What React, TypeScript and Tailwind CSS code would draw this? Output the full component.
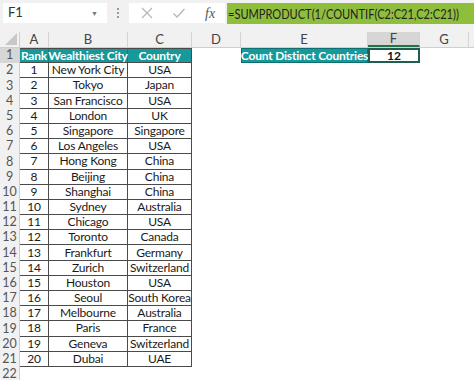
import React from "react";

const data: [number, string, string][] = [
  [1, "New York City", "USA"],
  [2, "Tokyo", "Japan"],
  [3, "San Francisco", "USA"],
  [4, "London", "UK"],
  [5, "Singapore", "Singapore"],
  [6, "Los Angeles", "USA"],
  [7, "Hong Kong", "China"],
  [8, "Beijing", "China"],
  [9, "Shanghai", "China"],
  [10, "Sydney", "Australia"],
  [11, "Chicago", "USA"],
  [12, "Toronto", "Canada"],
  [13, "Frankfurt", "Germany"],
  [14, "Zurich", "Switzerland"],
  [15, "Houston", "USA"],
  [16, "Seoul", "South Korea"],
  [17, "Melbourne", "Australia"],
  [18, "Paris", "France"],
  [19, "Geneva", "Switzerland"],
  [20, "Dubai", "UAE"],
];

const font = { fontFamily: "Lato, 'Open Sans', sans-serif" };

function ColHeader({ w, label, active }: { w: string; label: string; active?: boolean }) {
  return (
    <div
      className={`${w} h-full flex items-center justify-center border-r border-[#d4d4d4] text-[13px] text-[#444] ${
        active ? "bg-[#d6d6d6] border-b-2 border-b-[#217346]" : ""
      }`}
    >
      {label}
    </div>
  );
}

export default function App() {
  const rowH = "h-[15.2px]";
  return (
    <div className="w-[474px] h-[380px] bg-white overflow-hidden relative" style={font}>
      {/* toolbar */}
      <div className="h-[32px] bg-[#f1f1f1] flex items-start pt-[3px] pl-[3px]">
        <div className="w-[104px] h-[20px] bg-white flex items-center justify-between pl-[5px] pr-[9px] text-[13px] text-[#333]">
          <span>F1</span>
          <span className="text-[7px] text-[#777]">▼</span>
        </div>
        <div className="w-[22px] h-[20px] flex flex-col items-center justify-center gap-[2px]">
          <span className="w-[2px] h-[2px] bg-[#999]" />
          <span className="w-[2px] h-[2px] bg-[#999]" />
          <span className="w-[2px] h-[2px] bg-[#999]" />
        </div>
        <div className="w-[96px] h-[20px] bg-white flex items-center">
          <svg width="14" height="14" viewBox="0 0 14 14" className="ml-[11px]">
            <path d="M2 2 L12 12 M12 2 L2 12" stroke="#b5b5b5" strokeWidth="1.2" />
          </svg>
          <svg width="14" height="14" viewBox="0 0 14 14" className="ml-[18px]">
            <path d="M1.5 7.5 L5 11 L12.5 3" stroke="#b5b5b5" strokeWidth="1.3" fill="none" />
          </svg>
          <span
            className="ml-[19px] text-[14px] italic text-[#555]"
            style={{ fontFamily: "'Liberation Serif', serif" }}
          >
            fx
          </span>
        </div>
        <div className="ml-[2px] flex-1 h-[21px] bg-[#8fbe3d] flex items-center pl-[1px] text-[14px] text-[#222] whitespace-nowrap overflow-hidden">
          <span className="inline-block origin-left scale-x-[0.79]">=SUMPRODUCT(1/COUNTIF(C2:C21,C2:C21))</span>
        </div>
      </div>

      {/* column header row */}
      <div className="h-[16px] bg-[#f1f1f1] flex border-b border-[#cfcfcf]">
        <div className="w-[20px] h-full border-r border-[#cfcfcf] relative">
          <svg width="12" height="12" viewBox="0 0 12 12" className="absolute right-[2px] bottom-[2px]">
            <path d="M12 0 L12 12 L0 12 Z" fill="#c8c8c8" />
          </svg>
        </div>
        <ColHeader w="w-[29px]" label="A" />
        <ColHeader w="w-[79px]" label="B" />
        <ColHeader w="w-[64px]" label="C" />
        <ColHeader w="w-[49px]" label="D" />
        <ColHeader w="w-[127px]" label="E" />
        <ColHeader w="w-[52px]" label="F" active />
        <ColHeader w="w-[49px]" label="G" />
        <div className="flex-1" />
      </div>

      {/* rows */}
      <div className="flex">
        {/* row numbers */}
        <div className="w-[20px] bg-[#f1f1f1] border-r border-[#cfcfcf] flex flex-col">
          {Array.from({ length: 22 }, (_, i) => (
            <div
              key={i}
              className={`${rowH} shrink-0 flex items-center justify-center text-[12.5px] text-[#555] ${
                i === 0 ? "bg-[#d6d6d6]" : ""
              }`}
            >
              {i + 1}
            </div>
          ))}
        </div>

        {/* table A:C */}
        <div className="flex flex-col">
          <div className={`${rowH} shrink-0 flex bg-[#16999a] text-white font-bold text-[12px] tracking-[-0.2px] whitespace-nowrap border border-[#4a4a4a] border-l-0`}>
            <div className="w-[29px] flex items-center justify-center border-r border-[#137e7e]">Rank</div>
            <div className="w-[79px] flex items-center justify-center border-r border-[#137e7e]">Wealthiest City</div>
            <div className="w-[63px] flex items-center justify-center">Country</div>
          </div>
          {data.map(([r, city, country]) => (
            <div
              key={r}
              className={`${rowH} shrink-0 flex text-[12px] tracking-[-0.2px] text-[#1a1a1a] whitespace-nowrap border-b border-r border-[#4a4a4a]`}
            >
              <div className="w-[29px] flex items-center justify-center border-r border-[#4a4a4a]">{r}</div>
              <div className="w-[79px] flex items-center justify-center border-r border-[#4a4a4a]">{city}</div>
              <div className="w-[63px] flex items-center justify-center">{country}</div>
            </div>
          ))}
        </div>

        {/* D..G */}
        <div className="flex flex-col">
          <div className={`${rowH} shrink-0 flex`}>
            <div className="w-[49px]" />
            <div className="w-[127px] bg-[#16999a] border border-[#0f6f6f] text-white font-bold text-[12px] tracking-[-0.2px] whitespace-nowrap flex items-center justify-center">
              Count Distinct Countries
            </div>
            <div className="w-[52px] bg-white border-2 border-[#1f5e4e] font-bold text-[12px] text-[#111] flex items-center justify-center">
              12
            </div>
          </div>
        </div>
      </div>
    </div>
  );
}
